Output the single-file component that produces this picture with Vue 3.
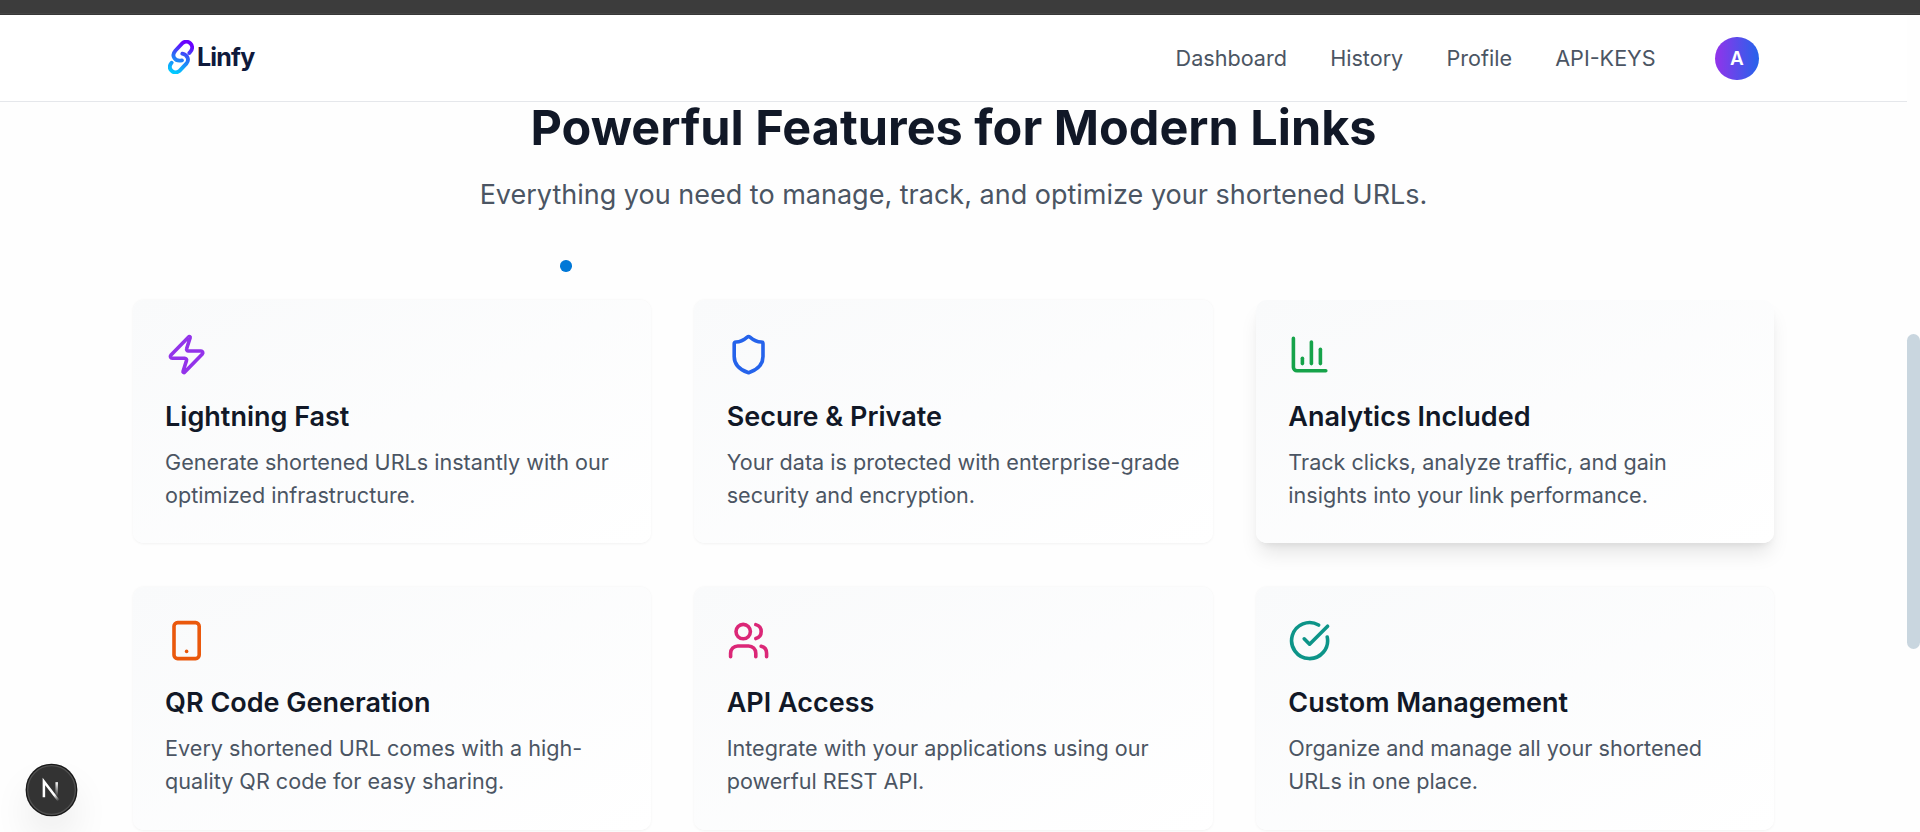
<script setup>
const links = ['Dashboard', 'History', 'Profile', 'API-KEYS']

const features = [
  {
    title: 'Lightning Fast',
    text: 'Generate shortened URLs instantly with our optimized infrastructure.',
    tone: 'purple',
    paths: ['M4 14a1 1 0 0 1-.78-1.63l9.9-10.2a.5.5 0 0 1 .86.46l-1.92 6.02A1 1 0 0 0 13 10h7a1 1 0 0 1 .78 1.63l-9.9 10.2a.5.5 0 0 1-.86-.46l1.92-6.02A1 1 0 0 0 11 14z'],
  },
  {
    title: 'Secure & Private',
    text: 'Your data is protected with enterprise-grade security and encryption.',
    tone: 'blue',
    paths: ['M20 13c0 5-3.5 7.5-7.66 8.95a1 1 0 0 1-.67-.01C7.5 20.5 4 18 4 13V6a1 1 0 0 1 1-1c2 0 4.5-1.2 6.24-2.72a1.17 1.17 0 0 1 1.52 0C14.51 3.81 17 5 19 5a1 1 0 0 1 1 1z'],
  },
  {
    title: 'Analytics Included',
    text: 'Track clicks, analyze traffic, and gain insights into your link performance.',
    tone: 'green',
    raised: true,
    paths: ['M3 3v16a2 2 0 0 0 2 2h16', 'M18 17V9', 'M13 17V5', 'M8 17v-3'],
  },
  {
    title: 'QR Code Generation',
    text: 'Every shortened URL comes with a high-quality QR code for easy sharing.',
    tone: 'orange',
    paths: ['M7 2h10a2 2 0 0 1 2 2v16a2 2 0 0 1-2 2H7a2 2 0 0 1-2-2V4a2 2 0 0 1 2-2z', 'M12 18h.01'],
  },
  {
    title: 'API Access',
    text: 'Integrate with your applications using our powerful REST API.',
    tone: 'pink',
    paths: ['M16 21v-2a4 4 0 0 0-4-4H6a4 4 0 0 0-4 4v2', 'M16 3.128a4 4 0 0 1 0 7.744', 'M22 21v-2a4 4 0 0 0-3-3.87', 'M13 7a4 4 0 1 1-8 0a4 4 0 1 1 8 0z'],
  },
  {
    title: 'Custom Management',
    text: 'Organize and manage all your shortened URLs in one place.',
    tone: 'teal',
    paths: ['M21.801 10A10 10 0 1 1 17 3.335', 'm9 11 3 3L22 4'],
  },
]
</script>

<template>
  <div class="window">
    <div class="strip"></div>
    <header class="header">
      <div class="brand">
        <svg class="brand-mark" viewBox="143 120 78 102" fill="none" stroke-width="11.5" stroke-linecap="round">
          <defs>
            <linearGradient id="mark" gradientUnits="userSpaceOnUse" x1="200" y1="122" x2="165" y2="220">
              <stop offset="0.1" stop-color="#6a00ff" />
              <stop offset="0.5" stop-color="#2b6bf5" />
              <stop offset="1" stop-color="#00ccff" />
            </linearGradient>
          </defs>
          <path stroke="url(#mark)" d="M207 159L211 154C225 137 203 116 187 129L165 152C152 167 163 186 185 181" />
          <path stroke="url(#mark)" d="M154 188L151 192C142 208 161 225 177 213L198 191C208 179 202 165 186 161" />
        </svg>
        <span class="brand-name">Linfy</span>
      </div>
      <nav class="nav">
        <a v-for="link in links" :key="link">{{ link }}</a>
        <span class="avatar">A</span>
      </nav>
    </header>

    <main class="features">
      <h2>Powerful Features for Modern Links</h2>
      <p class="lead">Everything you need to manage, track, and optimize your shortened URLs.</p>
      <div class="grid">
        <article v-for="f in features" :key="f.title" class="card" :class="{ raised: f.raised }">
          <svg class="icon" :class="f.tone" viewBox="0 0 24 24">
            <path v-for="d in f.paths" :key="d" :d="d" />
          </svg>
          <h3>{{ f.title }}</h3>
          <p>{{ f.text }}</p>
        </article>
      </div>
    </main>

    <span class="pointer"></span>
    <span class="thumb"></span>
    <div class="dev-badge">
      <svg viewBox="0 0 40 40" fill="none">
        <defs>
          <linearGradient id="diag" gradientUnits="userSpaceOnUse" x1="9.956" y1="11.123" x2="15.478" y2="17.967">
            <stop stop-color="#fff" />
            <stop offset="0.604" stop-color="#fff" stop-opacity="0" />
          </linearGradient>
          <linearGradient id="stem" gradientUnits="userSpaceOnUse" x1="11.822" y1="1.4" x2="11.792" y2="12">
            <stop stop-color="#fff" />
            <stop offset="1" stop-color="#fff" stop-opacity="0" />
          </linearGradient>
        </defs>
        <g transform="translate(12.4 12.7)" stroke-width="1.86">
          <path d="M13.3 15.2L2.34 1V12.6" stroke="url(#diag)" />
          <path d="M11.825 1.5V13.1" stroke="url(#stem)" />
        </g>
      </svg>
    </div>
  </div>
</template>

<style>
html {
  font-size: 21.6px;
}
body {
  overflow: hidden;
}
</style>

<style scoped>
.window {
  position: relative;
  box-sizing: border-box;
  height: 832px;
  padding-right: 13px;
  overflow: hidden;
  background: #fefefe;
  color: #111827;
  font-family: Inter, "Liberation Sans", sans-serif;
}
.strip {
  box-sizing: border-box;
  height: 15px;
  margin-right: -13px;
  background: #3c3c3c;
  border-bottom: 1px solid #373737;
  box-shadow: inset 0 -1px #444;
}
.header {
  position: relative;
  z-index: 1;
  display: flex;
  justify-content: space-between;
  align-items: center;
  box-sizing: border-box;
  height: 87px;
  padding: 1px 148.5px 0 168px;
  background: #fff;
  border-bottom: 1px solid #e5e7eb;
}
.brand {
  display: flex;
  align-items: center;
  gap: 3px;
  margin-top: -3px;
}
.brand-mark {
  width: 26px;
  height: 34px;
}
.brand-name {
  font-size: 25px;
  font-weight: 700;
  line-height: 34px;
  letter-spacing: -0.8px;
  color: #0f1a3c;
}
.nav {
  display: flex;
  align-items: center;
  gap: 2rem;
  line-height: 1.5rem;
  color: #4b5563;
}
.avatar {
  width: 2rem;
  height: 2rem;
  margin-left: 16.5px;
  border-radius: 50%;
  background: linear-gradient(to right, #9333ea, #2563eb);
  color: #fff;
  font-size: 0.875rem;
  font-weight: 600;
  line-height: 2rem;
  text-align: center;
}
.features {
  width: 76rem;
  margin: -1.4px auto 0;
  text-align: center;
}
h2 {
  margin: 0 0 1rem;
  font-size: 2.25rem;
  font-weight: 700;
  line-height: 2.5rem;
}
.lead {
  margin: 0 0 4rem;
  font-size: 1.25rem;
  line-height: 1.75rem;
  color: #4b5563;
}
.grid {
  display: grid;
  grid-template-columns: repeat(3, 1fr);
  gap: 2rem;
  text-align: left;
}
.card {
  padding: 1.5rem;
  border-radius: 0.5rem;
  background: linear-gradient(to bottom right, #f9fafb, #fff);
  box-shadow: 0 0.7px 2.7px rgba(0, 0, 0, 0.05);
}
.raised {
  box-shadow: 0 13.5px 20.25px -4px rgba(0, 0, 0, 0.1), 0 5.4px 8.1px -5.4px rgba(0, 0, 0, 0.1);
}
.icon {
  display: block;
  width: 2rem;
  height: 2rem;
  margin-bottom: 1rem;
  fill: none;
  stroke: currentColor;
  stroke-width: 2;
  stroke-linecap: round;
  stroke-linejoin: round;
}
.purple { color: #9333ea; }
.blue { color: #2563eb; }
.green { color: #16a34a; }
.orange { color: #ea580c; }
.pink { color: #db2777; }
.teal { color: #0d9488; }
h3 {
  margin: 0 0 0.5rem;
  font-size: 1.25rem;
  font-weight: 600;
  line-height: 1.75rem;
}
.card p {
  margin: 0;
  font-size: 1rem;
  line-height: 1.5rem;
  color: #4b5563;
}
.pointer {
  position: absolute;
  left: 560px;
  top: 260px;
  width: 11.5px;
  height: 11.5px;
  border-radius: 50%;
  background: #0078d7;
}
.thumb {
  position: absolute;
  right: 0;
  top: 334px;
  width: 13px;
  height: 315px;
  border-radius: 7px;
  background: #c9d6df;
}
.dev-badge {
  position: absolute;
  left: 26.7px;
  top: 765.4px;
  width: 49.4px;
  height: 49.4px;
  border-radius: 50%;
  background: #333;
  box-shadow: 0 0 0 1.35px #171717, inset 0 0 0 1.35px rgba(255, 255, 255, 0.14), 0 21.6px 43.2px -10.8px rgba(0, 0, 0, 0.24);
}
.dev-badge svg {
  display: block;
  width: 54px;
  height: 54px;
  margin: -2.3px;
}
</style>
